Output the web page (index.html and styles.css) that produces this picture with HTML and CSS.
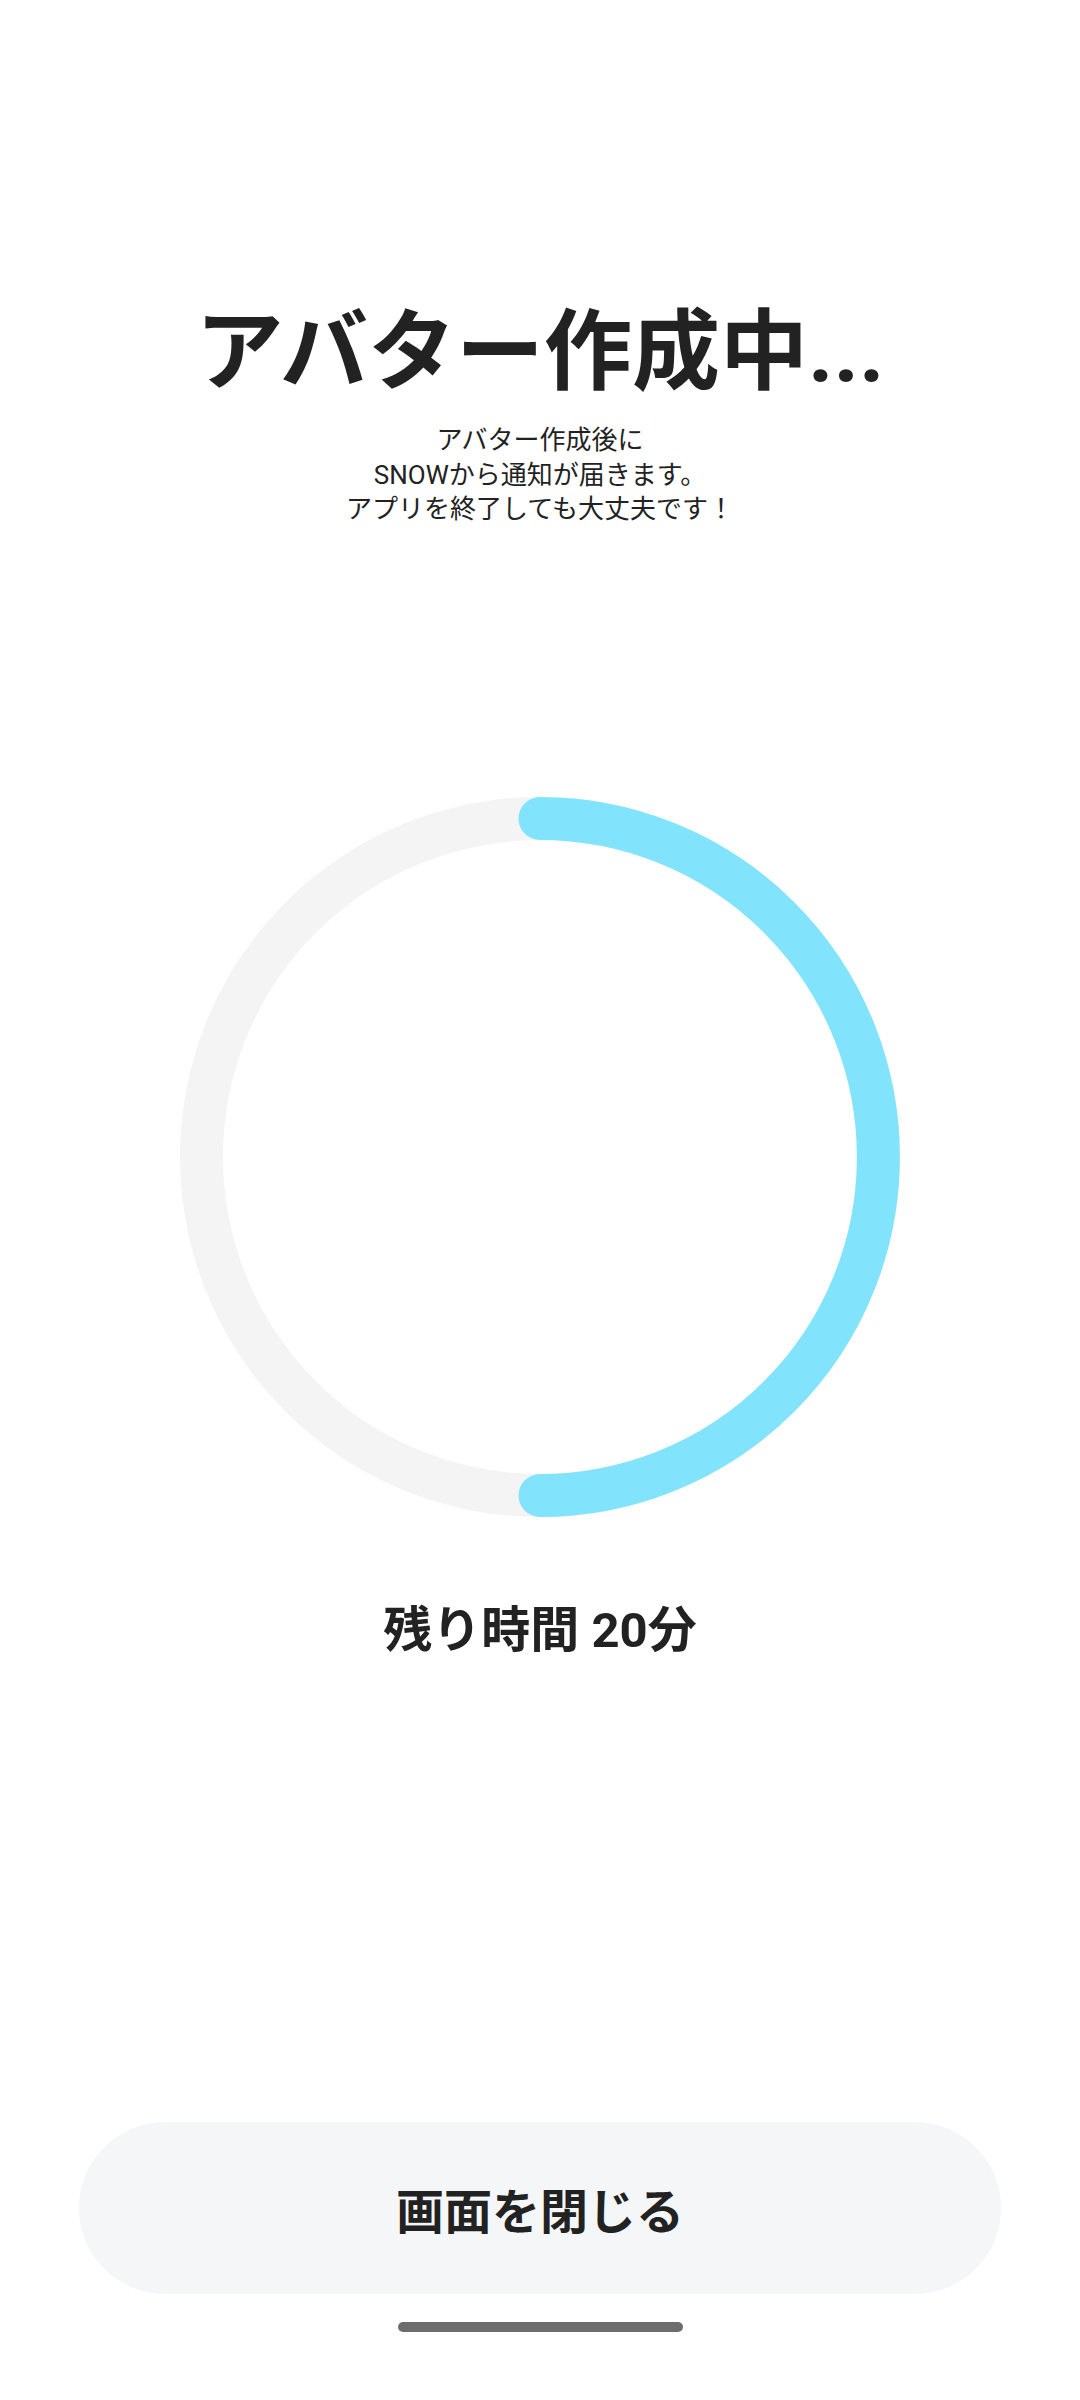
FILE: index.html
```html
<!DOCTYPE html>
<html lang="ja">
<head>
<meta charset="utf-8">
<title>アバター作成中</title>
<link rel="stylesheet" href="styles.css">
</head>
<body>
<main class="screen">
  <h1 class="title">アバター作成中...</h1>
  <p class="subtitle">アバター作成後に<br>SNOWから通知が届きます。<br>アプリを終了しても大丈夫です！</p>
  <div class="ring">
    <svg width="720" height="720" viewBox="0 0 720 720">
      <circle cx="360" cy="360" r="338.5" fill="none" stroke="#F4F4F4" stroke-width="43"/>
      <path d="M360 21.5 A338.5 338.5 0 0 1 360 698.5" fill="none" stroke="#82E4FC" stroke-width="43" stroke-linecap="round"/>
    </svg>
  </div>
  <p class="remaining">残り時間 20分</p>
  <div class="spacer"></div>
  <button class="close-btn">画面を閉じる</button>
  <div class="home-indicator"></div>
</main>
</body>
</html>
```
FILE: styles.css
```css
html, body {
  margin: 0;
  padding: 0;
  background: #ffffff;
}
.screen {
  width: 1080px;
  height: 2400px;
  display: flex;
  flex-direction: column;
  align-items: center;
  font-family: Roboto, "Noto Sans CJK JP", sans-serif;
  color: #222222;
  box-sizing: border-box;
}
.title {
  margin: 308px 0 0 0;
  font-size: 88px;
  line-height: 1;
  font-weight: 700;
  text-align: center;
}
.subtitle {
  margin: 27px 0 0 0;
  font-size: 26px;
  line-height: 34.6px;
  font-weight: 400;
  text-align: center;
}
.ring {
  margin-top: 270px;
  width: 720px;
  height: 720px;
  display: flex;
}
.remaining {
  margin: 89px 0 0 0;
  font-size: 49px;
  line-height: 1;
  font-weight: 700;
  text-align: center;
}
.spacer {
  flex: 1;
}
.close-btn {
  width: 922px;
  height: 172px;
  border: none;
  border-radius: 86px;
  background: #F5F6F8;
  font-family: Roboto, "Noto Sans CJK JP", sans-serif;
  font-size: 48px;
  font-weight: 700;
  color: #222222;
  padding: 0;
}
.home-indicator {
  margin: 28px 0 68px 0;
  width: 285px;
  height: 10px;
  border-radius: 5px;
  background: #6D6D6D;
}
```
